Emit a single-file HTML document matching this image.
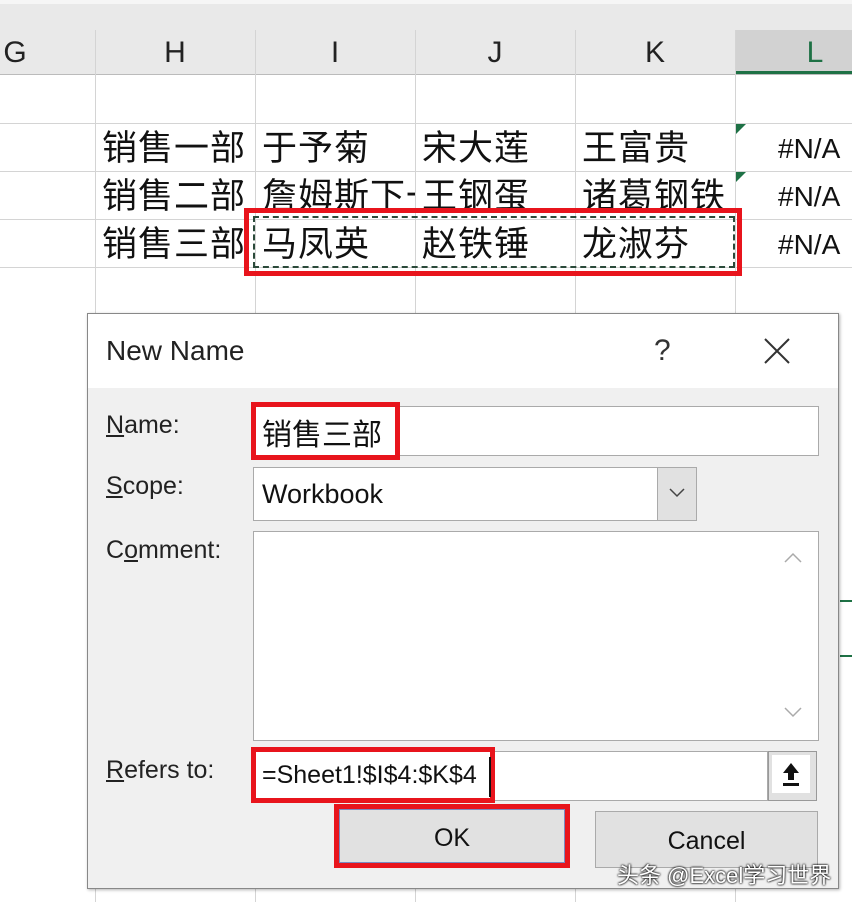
<!DOCTYPE html>
<html><head><meta charset="utf-8"><style>
*{margin:0;padding:0;box-sizing:border-box}
body{width:852px;height:902px;overflow:hidden;background:#fff;position:relative;font-family:"Liberation Sans","Noto Sans CJK SC",sans-serif;color:#111}
.a{position:absolute}
.vl{position:absolute;width:1px;background:#d4d4d4}
.hl{position:absolute;height:1px;background:#d4d4d4}
.hd{position:absolute;top:30px;height:44px;font-size:30px;text-align:center;line-height:46px;color:#222}
.c{position:absolute;font-size:35px;line-height:48px;white-space:nowrap;letter-spacing:1px}
.n{position:absolute;font-size:28px;line-height:48px;white-space:nowrap}
.lab{position:absolute;left:106px;font-size:25px;color:#222}
.box{position:absolute;background:#fff;border:1px solid #aaa}
</style></head><body>
<div class="a" style="left:0;top:0;width:852px;height:74px;background:#e9e9e9"></div>
<div class="a" style="left:0;top:0;width:852px;height:4px;background:#f6f6f6"></div>
<div class="a" style="left:735px;top:30px;width:117px;height:44px;background:#d2d2d2"></div>
<div class="a" style="left:735px;top:71px;width:117px;height:3px;background:#1e7145"></div>
<div class="hl" style="left:0;top:74px;width:852px;background:#bbb"></div>
<div class="hd" style="left:0;width:30px">G</div>
<div class="hd" style="left:95px;width:160px">H</div>
<div class="hd" style="left:255px;width:160px">I</div>
<div class="hd" style="left:415px;width:160px">J</div>
<div class="hd" style="left:575px;width:160px">K</div>
<div class="hd" style="left:760px;width:110px;color:#1e7145">L</div>
<div class="vl" style="left:95px;top:30px;height:872px"></div>
<div class="vl" style="left:255px;top:30px;height:872px"></div>
<div class="vl" style="left:415px;top:30px;height:872px"></div>
<div class="vl" style="left:575px;top:30px;height:872px"></div>
<div class="vl" style="left:735px;top:30px;height:872px"></div>
<div class="hl" style="left:0;top:123px;width:852px"></div>
<div class="hl" style="left:0;top:171px;width:852px"></div>
<div class="hl" style="left:0;top:219px;width:852px"></div>
<div class="hl" style="left:0;top:267px;width:852px"></div>
<div class="c" style="left:102px;top:125px;width:145px;overflow:hidden">销售一部</div>
<div class="c" style="left:262px;top:125px">于予菊</div>
<div class="c" style="left:422px;top:125px">宋大莲</div>
<div class="c" style="left:582px;top:125px">王富贵</div>
<div class="n" style="left:778px;top:125px">#N/A</div>
<div class="c" style="left:102px;top:173px;width:145px;overflow:hidden">销售二部</div>
<div class="c" style="left:262px;top:173px;width:153px;overflow:hidden">詹姆斯下一</div>
<div class="c" style="left:422px;top:173px">王钢蛋</div>
<div class="c" style="left:582px;top:173px">诸葛钢铁</div>
<div class="n" style="left:778px;top:173px">#N/A</div>
<div class="c" style="left:102px;top:221px;width:145px;overflow:hidden">销售三部</div>
<div class="c" style="left:262px;top:221px">马凤英</div>
<div class="c" style="left:422px;top:221px">赵铁锤</div>
<div class="c" style="left:582px;top:221px">龙淑芬</div>
<div class="n" style="left:778px;top:221px">#N/A</div>
<div class="a" style="left:736px;top:124px;width:0;height:0;border-top:10px solid #1e7145;border-right:10px solid transparent"></div>
<div class="a" style="left:736px;top:172px;width:0;height:0;border-top:10px solid #1e7145;border-right:10px solid transparent"></div>
<div class="a" style="left:244px;top:208px;width:498px;height:68px;border:5px solid #e8141c"></div>
<div class="a" style="left:253px;top:216px;width:482px;height:52px;border:2px dashed #2a4a3a"></div>
<div class="a" style="left:840px;top:600px;width:12px;height:2px;background:#1e7145"></div>
<div class="a" style="left:840px;top:655px;width:12px;height:2px;background:#1e7145"></div>

<div class="a" style="left:87px;top:313px;width:752px;height:576px;background:#f0f0f0;border:1px solid #888;box-shadow:1px 1px 3px rgba(0,0,0,.3)"></div>
<div class="a" style="left:88px;top:314px;width:750px;height:74px;background:#fff"></div>
<div class="a" style="left:106px;top:335px;font-size:28px;color:#222">New Name</div>
<div class="a" style="left:654px;top:334px;font-size:30px;color:#333">?</div>
<svg class="a" style="left:763px;top:337px" width="28" height="28"><path d="M2 2L26 26M26 2L2 26" stroke="#333" stroke-width="2"/></svg>

<div class="lab" style="top:411px"><u>N</u>ame:</div>
<div class="box" style="left:253px;top:406px;width:566px;height:50px"></div>
<div class="a" style="left:251px;top:402px;width:149px;height:58px;border:5px solid #e8141c;background:#fff"></div>
<div class="a" style="left:262px;top:410px;font-size:30px">销售三部</div>

<div class="lab" style="top:472px"><u>S</u>cope:</div>
<div class="box" style="left:253px;top:467px;width:444px;height:54px"></div>
<div class="a" style="left:657px;top:467px;width:40px;height:54px;background:#e1e1e1;border:1px solid #aaa"></div>
<svg class="a" style="left:669px;top:488px" width="16" height="10"><path d="M1 1L8 8L15 1" stroke="#444" fill="none" stroke-width="1.5"/></svg>
<div class="a" style="left:262px;top:479px;font-size:27px">Workbook</div>

<div class="lab" style="top:536px">C<u>o</u>mment:</div>
<div class="box" style="left:253px;top:531px;width:566px;height:210px"></div>
<svg class="a" style="left:783px;top:550px" width="20" height="170"><path d="M2 12L10 4L18 12M2 158L10 166L18 158" stroke="#aaa" fill="none" stroke-width="1.5"/></svg>

<div class="lab" style="top:756px"><u>R</u>efers to:</div>
<div class="box" style="left:253px;top:751px;width:515px;height:50px"></div>
<div class="a" style="left:251px;top:747px;width:244px;height:56px;border:5px solid #e8141c;background:#fff"></div>
<div class="a" style="left:262px;top:761px;font-size:25px">=Sheet1!$I$4:$K$4</div>
<div class="a" style="left:489px;top:757px;width:2px;height:40px;background:#111"></div>
<div class="a" style="left:768px;top:751px;width:49px;height:50px;background:#e1e1e1;border:1px solid #999"></div>
<div class="a" style="left:772px;top:755px;width:38px;height:38px;background:#fff"></div>
<svg class="a" style="left:780px;top:762px" width="22" height="26"><path d="M11 1L3 11H8V18H14V11H19Z" fill="#111"/><rect x="3" y="21" width="16" height="3" fill="#111"/></svg>

<div class="a" style="left:334px;top:804px;width:236px;height:64px;border:5px solid #e8141c"></div>
<div class="a" style="left:339px;top:809px;width:226px;height:54px;background:#e1e1e1;border:1px solid #7a8ac0;font-size:25px;text-align:center;line-height:56px">OK</div>
<div class="a" style="left:595px;top:811px;width:223px;height:57px;background:#e1e1e1;border:1px solid #aaa;font-size:25px;text-align:center;line-height:58px">Cancel</div>
<div class="a" style="left:617px;top:858px;font-size:22px;color:#fff;text-shadow:0 0 2px #000,0 0 2px #000">头条 @Excel学习世界</div>
</body></html>
